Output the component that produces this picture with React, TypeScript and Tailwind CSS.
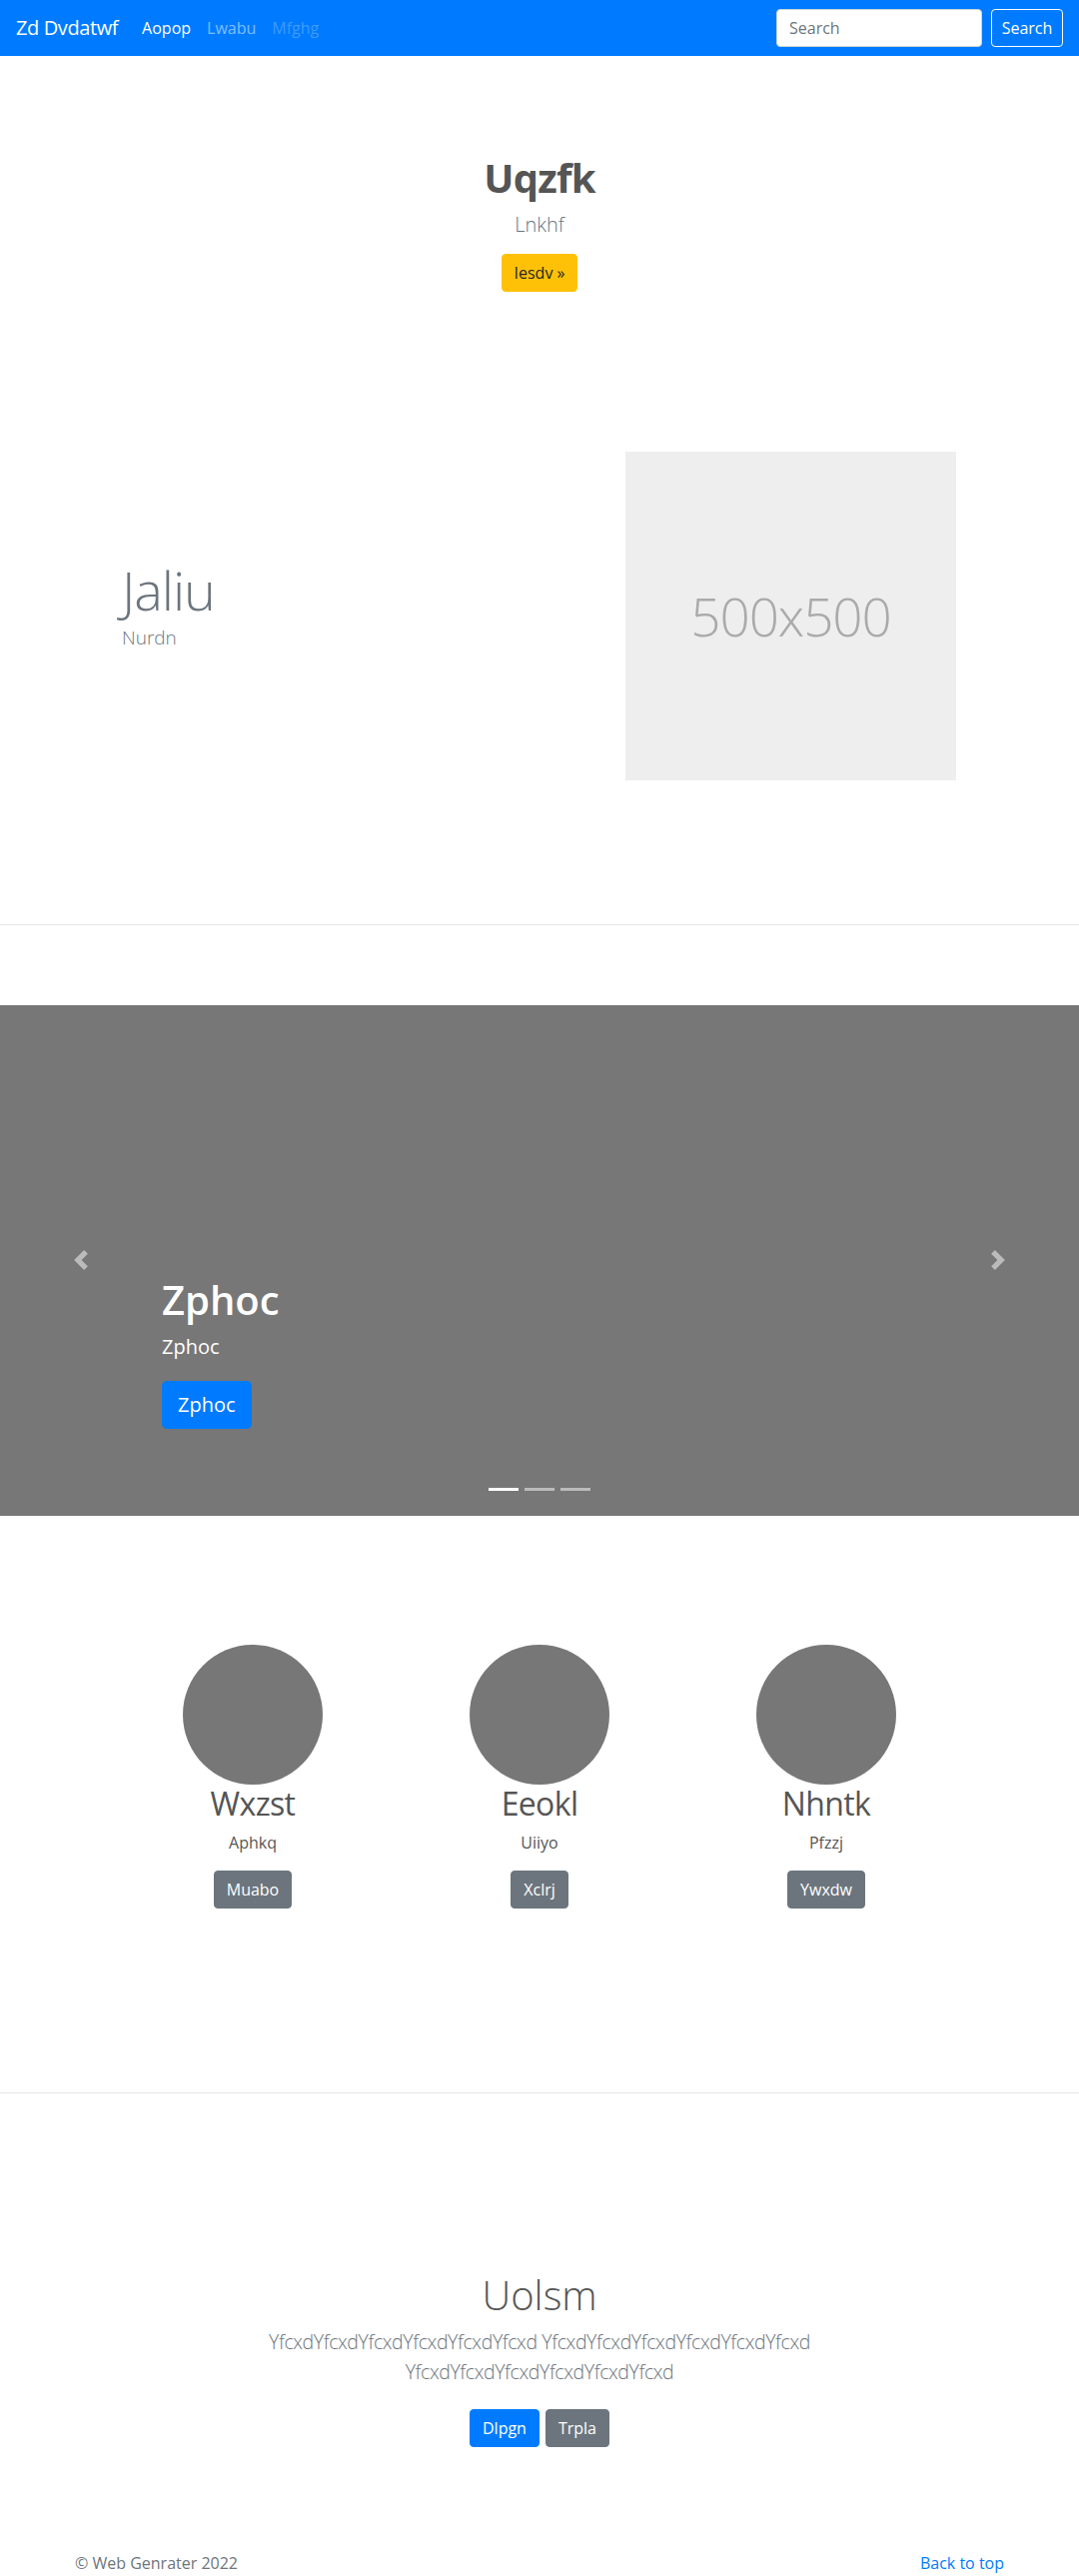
import React from 'react';

const navLinks = [
  { label: 'Aopop', className: 'text-white' },
  { label: 'Lwabu', className: 'text-white/50' },
  { label: 'Mfghg', className: 'text-white/25' },
];

const columns = [
  { title: 'Wxzst', text: 'Aphkq', action: 'Muabo' },
  { title: 'Eeokl', text: 'Uiiyo', action: 'Xclrj' },
  { title: 'Nhntk', text: 'Pfzzj', action: 'Ywxdw' },
];

function Navbar() {
  return (
    <nav className="flex h-[56px] items-center bg-[#007bff] px-4">
      <a href="#" className="mr-4 text-[20px] leading-[30px] tracking-[-0.02em] text-white">
        Zd Dvdatwf
      </a>
      <ul className="flex">
        {navLinks.map((link) => (
          <li key={link.label}>
            <a href="#" className={`block px-2 text-[16px] leading-[24px] ${link.className}`}>
              {link.label}
            </a>
          </li>
        ))}
      </ul>
      <form className="ml-auto flex items-center">
        <input
          type="text"
          placeholder="Search"
          className="mr-[9px] h-[38px] w-[206px] rounded border border-[#ced4da] bg-white px-3 text-[16px] text-[#495057] placeholder:text-[#6c757d]"
        />
        <button type="button" className="h-[38px] w-[72px] rounded border border-white text-[16px] text-white">
          Search
        </button>
      </form>
    </nav>
  );
}

function Carousel() {
  return (
    <div className="relative mt-[80px] h-[511px] bg-[#777]">
      <div className="flex h-full flex-col items-start justify-end pb-[87px] pl-[162px] text-white">
        <h1 className="mb-2 text-[40px] font-semibold leading-[1.2]">Zphoc</h1>
        <p className="mb-[19px] text-[20px] leading-[30px]">Zphoc</p>
        <a href="#" className="rounded-[5px] bg-[#007bff] px-4 py-2 text-[20px] leading-[32px] text-white">
          Zphoc
        </a>
      </div>
      <a href="#" className="absolute left-[71px] top-[245px] opacity-50">
        <svg width="20" height="20" viewBox="0 0 8 8" fill="#fff">
          <path d="M5.25 0l-4 4 4 4 1.5-1.5L4.25 4l2.5-2.5L5.25 0z" />
        </svg>
      </a>
      <a href="#" className="absolute left-[989px] top-[245px] opacity-50">
        <svg width="20" height="20" viewBox="0 0 8 8" fill="#fff">
          <path d="M2.75 0l-1.5 1.5L3.75 4l-2.5 2.5L2.75 8l4-4-4-4z" />
        </svg>
      </a>
      <ol className="absolute bottom-[25px] left-0 right-0 flex justify-center gap-[6px]">
        <li className="h-[3px] w-[30px] bg-white" />
        <li className="h-[3px] w-[30px] bg-white/50" />
        <li className="h-[3px] w-[30px] bg-white/50" />
      </ol>
    </div>
  );
}

export default function App() {
  return (
    <div className="bg-white font-['Open_Sans','Noto_Sans',sans-serif]">
      <Navbar />

      <section className="flex flex-col items-center pt-[98px] text-center">
        <h1 className="mb-2 text-[40px] font-bold leading-[1.2] tracking-[-0.02em] text-[#555]">Uqzfk</h1>
        <p className="mb-[14px] text-[20px] font-light leading-[30px] text-[#6c757d]">Lnkhf</p>
        <a href="#" className="rounded border border-[#ffc107] bg-[#ffc107] px-3 py-1.5 text-[16px] leading-[24px] text-[#212529]">
          Iesdv »
        </a>
      </section>

      <section className="mt-[160px] flex items-center justify-between pl-[122px] pr-[123px]">
        <div className="pb-[22px]">
          <h2 className="text-[54px] font-light leading-[1.2] tracking-[-0.02em] text-[#6c757d]">Jaliu</h2>
          <p className="text-[19px] font-light leading-[30px] text-[#6c757d]">Nurdn</p>
        </div>
        <div className="flex h-[329px] w-[331px] items-center justify-center bg-[#eee]">
          <span className="text-[53px] font-light tracking-[-0.02em] text-[#aaa]">500x500</span>
        </div>
      </section>

      <div className="mt-[144px] h-px bg-[#e6e6e6]" />

      <Carousel />

      <section className="mx-auto grid w-[861px] grid-cols-3 pt-[129px]">
        {columns.map((col) => (
          <div key={col.title} className="flex flex-col items-center text-center">
            <div className="h-[140px] w-[140px] rounded-full bg-[#777]" />
            <h2 className="mb-2 text-[32px] leading-[1.2] tracking-[-0.02em] text-[#555]">{col.title}</h2>
            <p className="mb-4 text-[16px] leading-[24px] text-[#555]">{col.text}</p>
            <a href="#" className="rounded border border-[#6c757d] bg-[#6c757d] px-3 py-1.5 text-[16px] leading-[24px] text-white">
              {col.action}
            </a>
          </div>
        ))}
      </section>

      <div className="mt-[184px] h-px bg-[#e6e6e6]" />

      <section className="flex flex-col items-center pt-[178px] text-center">
        <h1 className="mb-2 text-[40px] font-light leading-[1.2] text-[#555]">Uolsm</h1>
        <p className="mb-[22px] max-w-[610px] text-[19.5px] font-light leading-[30px] tracking-[-0.02em] text-[#6c757d]">
          YfcxdYfcxdYfcxdYfcxdYfcxdYfcxd YfcxdYfcxdYfcxdYfcxdYfcxdYfcxd YfcxdYfcxdYfcxdYfcxdYfcxdYfcxd
        </p>
        <div className="flex gap-[6px]">
          <a href="#" className="rounded border border-[#007bff] bg-[#007bff] px-3 py-1.5 text-[16px] leading-[24px] text-white">
            Dlpgn
          </a>
          <a href="#" className="rounded border border-[#6c757d] bg-[#6c757d] px-3 py-1.5 text-[16px] leading-[24px] text-white">
            Trpla
          </a>
        </div>
      </section>

      <footer className="mt-[104px] flex justify-between px-[75px] pb-12 text-[16px] leading-[24px]">
        <p className="text-[#6c757d]">© Web Genrater 2022</p>
        <a href="#" className="text-[#007bff]">Back to top</a>
      </footer>
    </div>
  );
}
